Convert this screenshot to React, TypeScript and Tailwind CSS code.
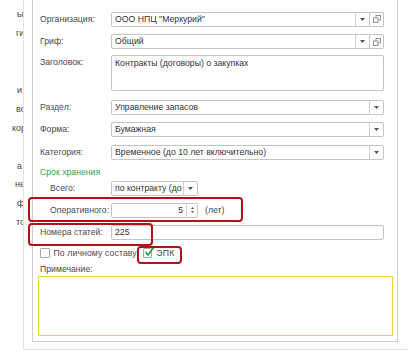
import React from "react";

function Arrow() {
  return (
    <svg width="5" height="3" viewBox="0 0 5 3">
      <path d="M0 0H5L2.5 3Z" fill="#555" />
    </svg>
  );
}

function DropBtn() {
  return (
    <div className="w-[14px] h-full border-l border-[#d0d0d0] flex items-center justify-center shrink-0">
      <Arrow />
    </div>
  );
}

function CopyBtn() {
  return (
    <div className="w-[14px] h-full border border-l-0 border-[#c4c4c4] rounded-r-[2px] flex items-center justify-center shrink-0 bg-white">
      <svg width="8" height="8" viewBox="0 0 8 8">
        <rect x="3" y="0.5" width="4.5" height="4.5" fill="white" stroke="#8a8a8a" strokeWidth="0.9" />
        <rect x="0.5" y="3" width="4.5" height="4.5" fill="white" stroke="#8a8a8a" strokeWidth="0.9" />
      </svg>
    </div>
  );
}

function Box({
  children,
  className = "",
}: {
  children?: React.ReactNode;
  className?: string;
}) {
  return (
    <div
      className={
        "h-[15px] border border-[#c4c4c4] rounded-[2px] bg-white flex items-stretch overflow-hidden " +
        className
      }
    >
      {children}
    </div>
  );
}

function Val({ children, right = false }: { children?: React.ReactNode; right?: boolean }) {
  return (
    <div
      className={
        "flex-1 min-w-0 flex items-center px-[3px] text-[#333] whitespace-nowrap overflow-hidden " +
        (right ? "justify-end" : "")
      }
    >
      {children}
    </div>
  );
}

function Label({ children, indent = false }: { children: React.ReactNode; indent?: boolean }) {
  return (
    <div
      className={
        "w-[71px] shrink-0 flex items-center text-[#4a4a4a] whitespace-nowrap " +
        (indent ? "pl-[10px]" : "")
      }
    >
      {children}
    </div>
  );
}

const frags: { t: string; pl: string }[] = [
  { t: "ы", pl: "pl-[17px]" },
  { t: "ги", pl: "pl-[16px]" },
  { t: "", pl: "" },
  { t: "", pl: "" },
  { t: "и", pl: "pl-[17px]" },
  { t: "вс", pl: "pl-[16px]" },
  { t: "кор", pl: "pl-[12px]" },
  { t: "", pl: "" },
  { t: "а", pl: "pl-[17px]" },
  { t: "не", pl: "pl-[15px]" },
  { t: "ф", pl: "pl-[17px]" },
  { t: "то", pl: "pl-[16px]" },
];

export default function App() {
  return (
    <div className="relative w-[418px] h-[362px] bg-white overflow-hidden flex font-['Liberation_Sans',Arial,sans-serif] text-[8.7px] leading-none">
      {/* background window fragments */}
      <div className="w-[23px] shrink-0 overflow-hidden pt-[5.5px] flex flex-col">
        {frags.map((f, i) => (
          <div key={i} className={"h-[18.9px] flex items-center whitespace-nowrap text-[#444] text-[9px] " + f.pl}>
            {f.t}
          </div>
        ))}
      </div>

      {/* window */}
      <div className="w-[385px] h-[350px] shrink-0 border-l border-b border-[#e3e3e3] pl-[8px] pr-[10px]">
        <div className="h-[342px] border-l border-r border-b border-[#cdcdcd] pl-[7px] pr-[13px] pt-[11.5px] flex flex-col">
          {/* Организация */}
          <div className="flex h-[15px]">
            <Label>Организация:</Label>
            <Box className="flex-1 rounded-r-none">
              <Val>ООО НПЦ "Меркурий"</Val>
              <DropBtn />
            </Box>
            <CopyBtn />
          </div>
          {/* Гриф */}
          <div className="flex h-[15px] mt-[7.5px]">
            <Label>Гриф:</Label>
            <Box className="flex-1 rounded-r-none">
              <Val>Общий</Val>
              <DropBtn />
            </Box>
            <CopyBtn />
          </div>
          {/* Заголовок */}
          <div className="flex h-[36px] mt-[6px]">
            <div className="w-[71px] shrink-0 text-[#4a4a4a] pt-[3px]">Заголовок:</div>
            <div className="flex-1 border border-[#c4c4c4] rounded-[2px] px-[3px] pt-[3px] text-[#333]">
              Контракты (договоры) о закупках
            </div>
          </div>
          {/* Раздел */}
          <div className="flex h-[15px] mt-[8.5px]">
            <Label>Раздел:</Label>
            <Box className="flex-1">
              <Val>Управление запасов</Val>
              <DropBtn />
            </Box>
          </div>
          {/* Форма */}
          <div className="flex h-[15px] mt-[7px]">
            <Label>Форма:</Label>
            <Box className="flex-1">
              <Val>Бумажная</Val>
              <DropBtn />
            </Box>
          </div>
          {/* Категория */}
          <div className="flex h-[15px] mt-[8px]">
            <Label>Категория:</Label>
            <Box className="flex-1">
              <Val>Временное (до 10 лет включительно)</Val>
              <DropBtn />
            </Box>
          </div>
          {/* Срок хранения */}
          <div className="h-[10px] mt-[7.5px] flex items-center text-[#2aa655]">Срок хранения</div>
          {/* Всего */}
          <div className="flex h-[15px] mt-[3.5px]">
            <Label indent>Всего:</Label>
            <Box className="w-[87px]">
              <Val>по контракту (до</Val>
              <DropBtn />
            </Box>
          </div>
          {/* Оперативного */}
          <div className="flex h-[15px] mt-[7px]">
            <Label indent>Оперативного:</Label>
            <Box className="w-[87px]">
              <Val right>5</Val>
              <div className="w-[11px] border-l border-[#d0d0d0] flex flex-col items-center justify-center gap-[2px] shrink-0">
                <svg width="3" height="2" viewBox="0 0 3 2">
                  <path d="M0 2H3L1.5 0Z" fill="#555" />
                </svg>
                <svg width="3" height="2" viewBox="0 0 3 2">
                  <path d="M0 0H3L1.5 2Z" fill="#555" />
                </svg>
              </div>
            </Box>
            <div className="flex items-center pl-[7px] text-[#4a4a4a]">(лет)</div>
          </div>
          {/* Номера статей */}
          <div className="flex h-[15.5px] mt-[7.5px]">
            <Label>Номера статей:</Label>
            <Box className="flex-1 h-[15.5px]">
              <Val>225</Val>
            </Box>
          </div>
          {/* checkboxes */}
          <div className="flex h-[11px] mt-[7px] items-center">
            <div className="w-[9.5px] h-[9.5px] border border-[#a8a8a8] rounded-[1px] bg-white shrink-0" />
            <div className="ml-[4px] text-[#4a4a4a] whitespace-nowrap tracking-[0.1px]">По личному составу</div>
            <div className="relative ml-[6px] w-[9.5px] h-[9.5px] border border-[#a8a8a8] rounded-[1px] bg-white shrink-0">
              <svg className="absolute left-[0px] top-[-3px]" width="11" height="11" viewBox="0 0 11 11">
                <path d="M1.5 6 L4 9 L10 1" fill="none" stroke="#1f9d3a" strokeWidth="1.6" />
              </svg>
            </div>
            <div className="ml-[4px] text-[#4a4a4a] tracking-[0.2px]">ЭПК</div>
          </div>
          {/* Примечание */}
          <div className="h-[9px] mt-[6px] flex items-center text-[#4a4a4a]">Примечание:</div>
          <div className="h-[60px] mt-[2px] -ml-[2px] -mr-[9px] border-[1.5px] border-[#ffd23c] bg-white" />
        </div>
      </div>

      {/* red highlight frames */}
      <div className="absolute left-[28px] top-[196.5px] w-[215px] h-[25px] border-[2.5px] border-[#b3101a] rounded-[4px]" />
      <div className="absolute left-[28px] top-[223px] w-[125px] h-[23px] border-[2.5px] border-[#b3101a] rounded-[4px]" />
      <div className="absolute left-[137px] top-[245.5px] w-[44.5px] h-[18px] border-[2.5px] border-[#b3101a] rounded-[4px]" />
    </div>
  );
}
